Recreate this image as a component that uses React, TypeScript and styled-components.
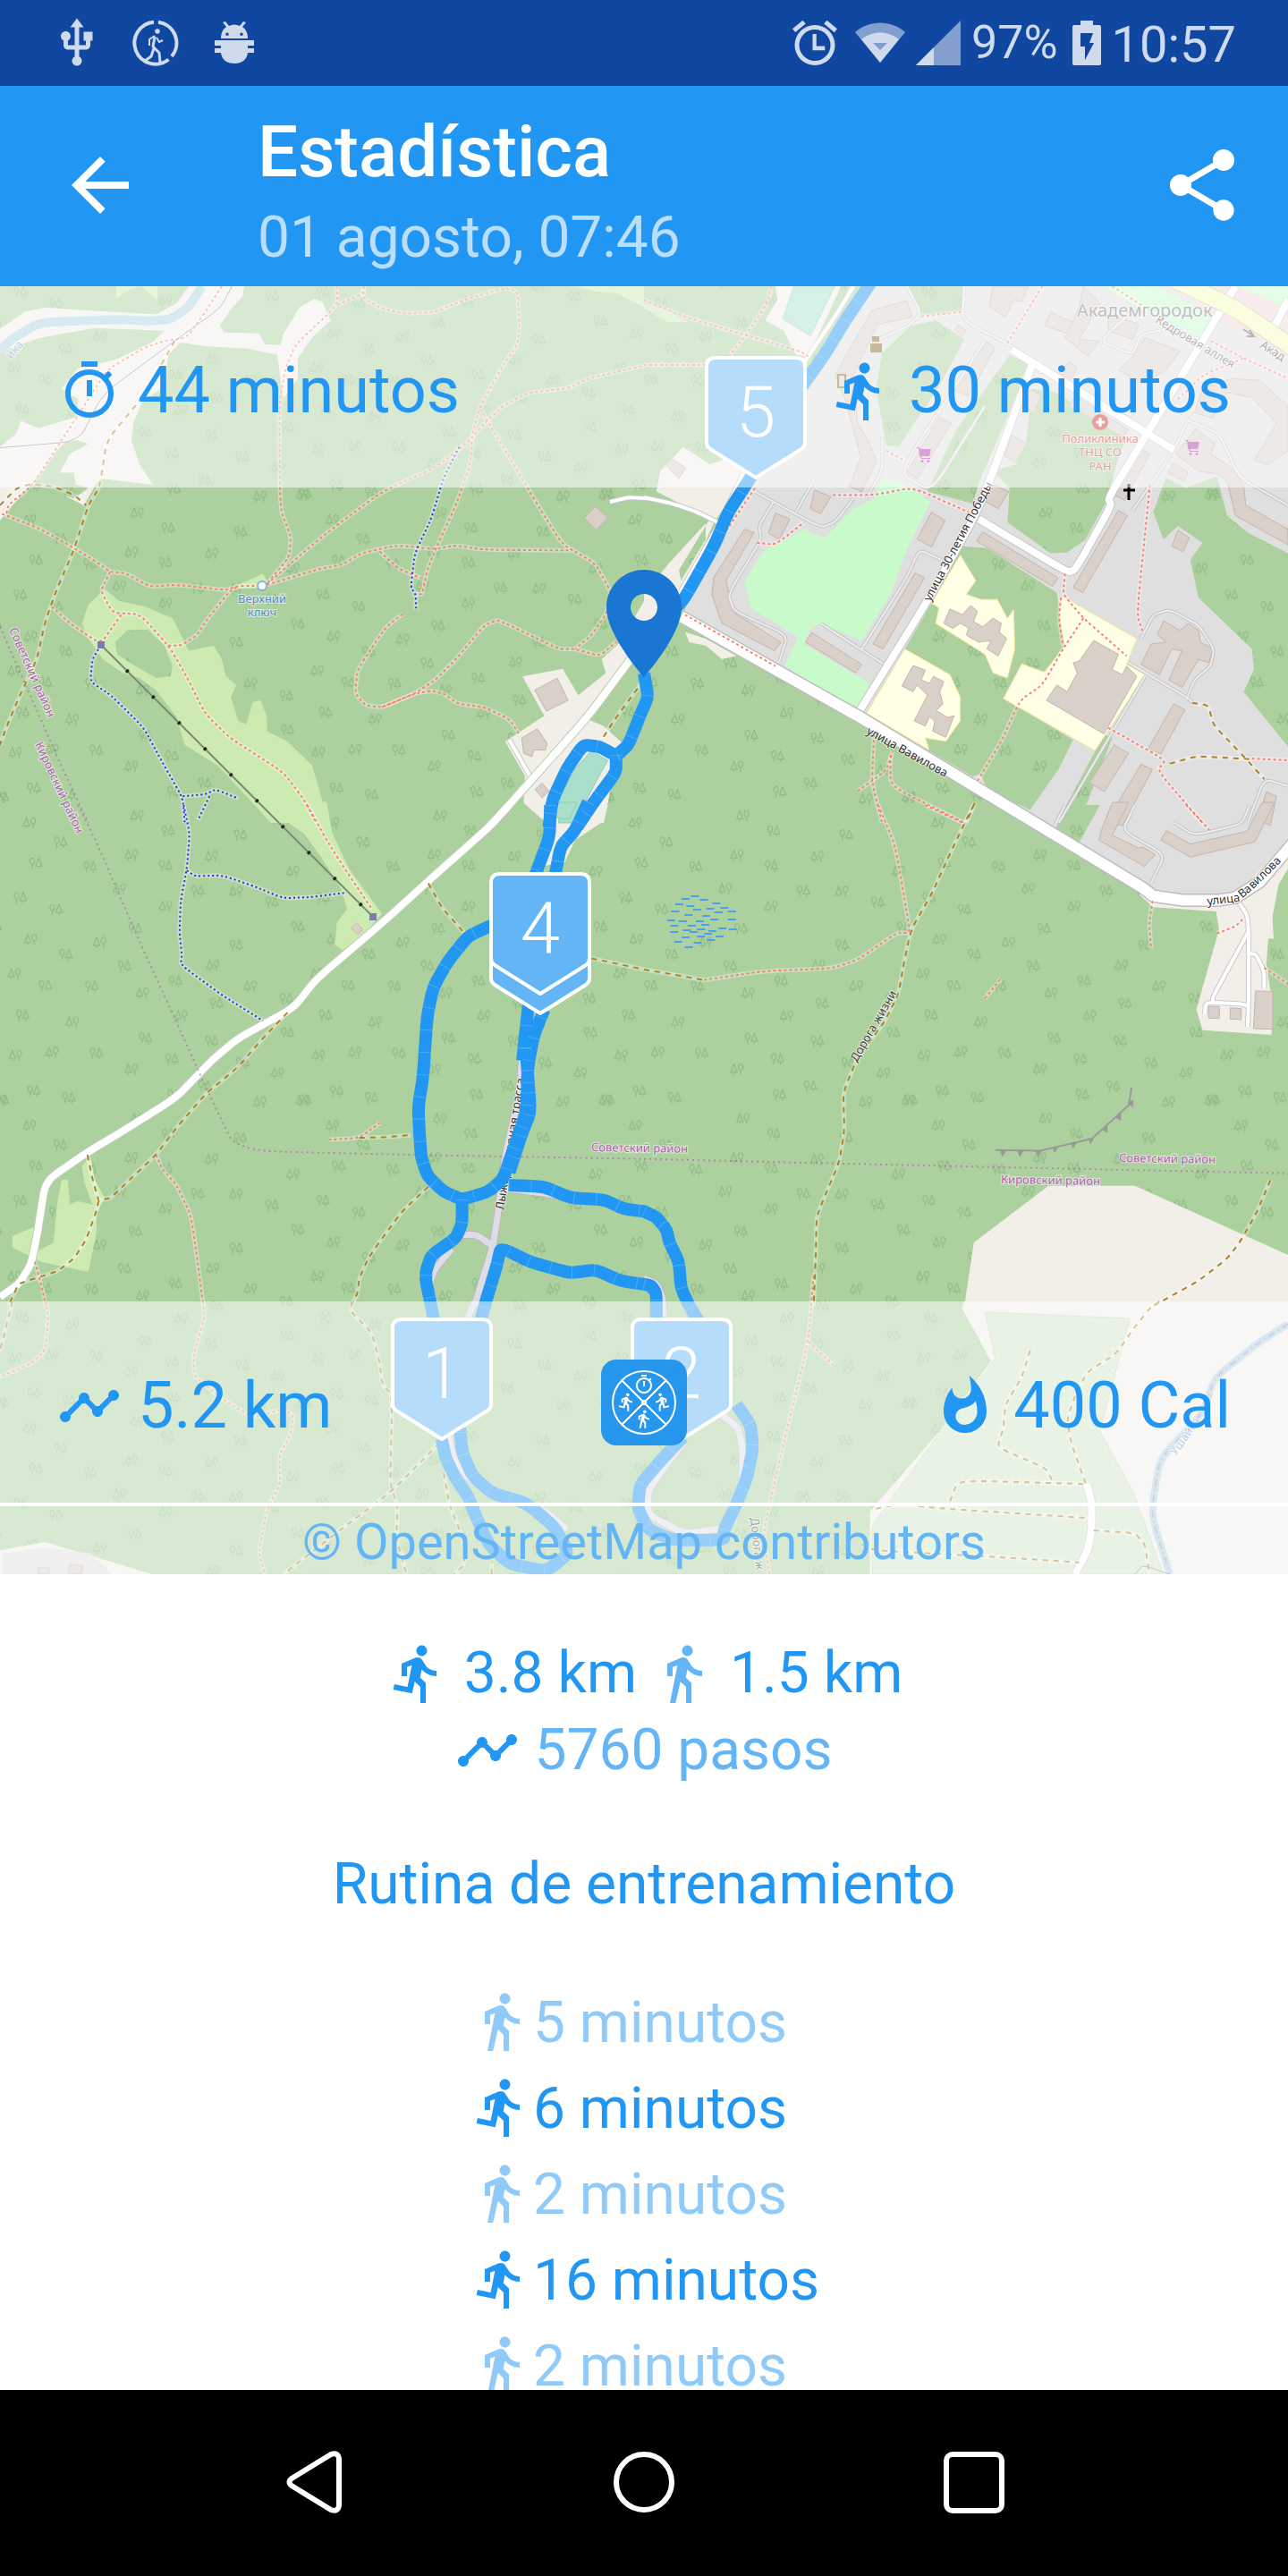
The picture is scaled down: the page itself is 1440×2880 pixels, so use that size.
import React from "react";
import styled, { createGlobalStyle } from "styled-components";

/* ------------------------------------------------------------------ */
/* Theme                                                               */
/* ------------------------------------------------------------------ */

const color = {
  statusBar: "#0f47a1",
  statusIcon: "#cfdaec",
  primary: "#2196f3",
  primaryDark: "#1976d2",
  primarySoft: "#64b5f6",
  primaryPale: "#90caf9",
  subtitle: "#bbdefb",
  veil: "rgba(255, 255, 255, 0.53)",
};

const GlobalStyle = createGlobalStyle`
  *, *::before, *::after { box-sizing: border-box; }
  html, body { margin: 0; padding: 0; background: #fff; }
  body { font-family: Roboto, "Noto Sans", sans-serif; }
`;

/* ------------------------------------------------------------------ */
/* Layout parts                                                        */
/* ------------------------------------------------------------------ */

const Screen = styled.div`
  display: flex;
  flex-direction: column;
  height: 100vh;
  background: #fff;
`;

const StatusBar = styled.div`
  display: flex;
  align-items: center;
  justify-content: space-between;
  flex: none;
  height: 96px;
  padding: 0 58px 0 56px;
  background: ${color.statusBar};
  color: ${color.statusIcon};
`;

const Notifications = styled.div`
  display: flex;
  gap: 28px;
`;

const SystemState = styled.div`
  display: flex;
  align-items: center;
  gap: 12px;
`;

const StatusIcon = styled.svg<{ $before?: number; $after?: number }>`
  display: block;
  margin-left: ${(p) => p.$before ?? 0}px;
  margin-right: ${(p) => p.$after ?? 0}px;
`;

const BatteryLevel = styled.span`
  font-size: 52px;
  line-height: 64px;
`;

const Clock = styled.time`
  padding-top: 4px;
  font-size: 56px;
  line-height: 64px;
`;

const AppBar = styled.header`
  display: flex;
  align-items: center;
  flex: none;
  padding: 14px 48px 14px 64px;
  background: ${color.primary};
  color: #fff;
`;

const IconButton = styled.button`
  display: block;
  flex: none;
  padding: 0;
  border: 0;
  background: none;
  color: inherit;
  cursor: pointer;
`;

const Titles = styled.div`
  flex: 1;
  padding: 12px 0 0 128px;
`;

const Title = styled.h1`
  margin: 0;
  font-size: 80px;
  line-height: 96px;
  font-weight: 500;
`;

const Subtitle = styled.p`
  margin: 0;
  padding-top: 8px;
  color: ${color.subtitle};
  font-size: 64px;
  line-height: 80px;
`;

const MapSection = styled.section`
  position: relative;
  flex: none;
  aspect-ratio: 1 / 1;
`;

const MapDrawing = styled.svg`
  display: block;
  width: 100%;
  height: 100%;
`;

const MapOverlay = styled.div`
  position: absolute;
  inset: 0;
  display: flex;
  flex-direction: column;
`;

const StatStrip = styled.div`
  display: grid;
  grid-template-columns: 1fr auto 1fr;
  align-items: center;
  height: 225px;
  padding: 0 64px;
  background: ${color.veil};
  color: ${color.primary};
`;

const OverlaySpacer = styled.div`
  flex: 1;
`;

const Stat = styled.div<{ $end?: boolean }>`
  display: flex;
  align-items: center;
  justify-content: ${(p) => (p.$end ? "flex-end" : "flex-start")};
  gap: 18px;
  grid-column: ${(p) => (p.$end ? 3 : 1)};
  padding-top: 8px;
  font-size: 72px;
  line-height: 84px;
  white-space: nowrap;
`;

const Attribution = styled.div`
  height: 80px;
  border-top: 4px solid #fff;
  background: ${color.veil};
  background-clip: padding-box;
  color: ${color.primarySoft};
  font-size: 56px;
  line-height: 80px;
  text-align: center;
`;

const Details = styled.main`
  flex: 1;
  min-height: 0;
  overflow: hidden;
  padding-top: 68px;
  color: ${color.primary};
  font-size: 64px;
  line-height: 86px;
`;

const SummaryLine = styled.p`
  display: flex;
  align-items: center;
  justify-content: center;
  gap: 16px;
  margin: 0;
`;

const Tinted = styled.span<{ $tint: string }>`
  display: inline-flex;
  color: ${(p) => p.$tint};
`;

const RoutineTitle = styled.h2`
  margin: 64px 0;
  font-size: 64px;
  line-height: 86px;
  font-weight: 400;
  text-align: center;
`;

const RoutineList = styled.ul`
  width: max-content;
  margin: 0 auto;
  padding: 0;
  list-style: none;
`;

const RoutineStep = styled.li<{ $run: boolean }>`
  display: flex;
  align-items: center;
  color: ${(p) => (p.$run ? color.primary : color.primaryPale)};
  line-height: 96px;
`;

const StepIcon = styled.span`
  display: flex;
  padding-bottom: 4px;
`;

const NavBar = styled.nav`
  display: flex;
  align-items: center;
  justify-content: center;
  flex: none;
  gap: 288px;
  height: 208px;
  background: #000;
  color: #fff;
`;

/* ------------------------------------------------------------------ */
/* Icons                                                               */
/* ------------------------------------------------------------------ */

const RUN =
  "M13.500 5.500c1.100 0 2-.9 2-2s-.9-2-2-2-2 .9-2 2 .9 2 2 2zM9.900 19.400l1-4.400 2.100 2v6h2v-7.500l-2.100-2 .6-3c1.300 1.500 3.300 2.500 5.500 2.500v-2c-1.900 0-3.500-1-4.300-2.400l-1-1.600c-.4-.6-1-1-1.700-1-.3 0-.5.1-.8.1L6 8.300V13h2V9.600l1.800-.7-1.600 8.100-4.900-1-.4 2z";
const WALK =
  "M13.5 5.5c1.1 0 2-.9 2-2s-.9-2-2-2-2 .9-2 2 .9 2 2 2zM9.8 8.9L7 23h2.1l1.8-8 2.1 2v6h2v-7.5l-2.1-2 .6-3C14.8 12 16.8 13 19 13v-2c-1.9 0-3.5-1-4.3-2.4l-1-1.6c-.4-.6-1-1-1.7-1-.3 0-.5.1-.8.1L6 8.3V13h2V9.6l1.8-.7z";
const TIMER =
  "M15 1H9v2h6V1zm-4 13h2V8h-2v6zm8.03-6.61l1.42-1.42c-.43-.51-.9-.99-1.41-1.41l-1.42 1.42C16.07 4.74 14.12 4 12 4c-4.97 0-9 4.03-9 9s4.02 9 9 9 9-4.03 9-9c0-2.12-.74-4.07-1.97-5.61zM12 20c-3.87 0-7-3.13-7-7s3.13-7 7-7 7 3.13 7 7-3.13 7-7 7z";
const TIMELINE =
  "M23 8c0 1.1-.9 2-2 2-.18 0-.35-.02-.51-.07l-3.56 3.55c.05.16.07.34.07.52 0 1.1-.9 2-2 2s-2-.9-2-2c0-.18.02-.36.07-.52l-2.55-2.55c-.16.05-.34.07-.52.07s-.36-.02-.52-.07l-4.55 4.56c.05.16.07.33.07.51 0 1.1-.9 2-2 2s-2-.9-2-2 .9-2 2-2c.18 0 .35.02.51.07l4.56-4.55C8.02 9.36 8 9.18 8 9c0-1.1.9-2 2-2s2 .9 2 2c0 .18-.02.36-.07.52l2.55 2.55c.16-.05.34-.07.52-.07s.36.02.52.07l3.55-3.56C19.02 8.35 19 8.18 19 8c0-1.1.9-2 2-2s2 .9 2 2z";
const FLAME =
  "M13.5.67s.74 2.65.74 4.8c0 2.06-1.35 3.73-3.41 3.73-2.07 0-3.63-1.67-3.63-3.73l.03-.36C5.21 7.51 4 10.62 4 14c0 4.42 3.58 8 8 8s8-3.58 8-8C20 8.61 17.41 3.8 13.5.67zM11.71 19c-1.78 0-3.22-1.4-3.22-3.14 0-1.62 1.05-2.76 2.81-3.12 1.77-.36 3.6-1.21 4.62-2.58.39 1.29.59 2.65.59 4.04 0 2.65-2.15 4.8-4.8 4.8z";
const BACK = "M20 11H7.83l5.59-5.59L12 4l-8 8 8 8 1.41-1.41L7.83 13H20v-2z";
const SHARE =
  "M18 16.08c-.76 0-1.44.3-1.96.77L8.91 12.7c.05-.23.09-.46.09-.7s-.04-.47-.09-.7l7.05-4.11c.54.5 1.25.81 2.04.81 1.66 0 3-1.34 3-3s-1.34-3-3-3-3 1.34-3 3c0 .24.04.47.09.7L8.04 9.81C7.5 9.31 6.79 9 6 9c-1.66 0-3 1.34-3 3s1.34 3 3 3c.79 0 1.5-.31 2.04-.81l7.12 4.16c-.05.21-.08.43-.08.65 0 1.61 1.31 2.92 2.92 2.92 1.61 0 2.92-1.31 2.92-2.92s-1.31-2.92-2.92-2.92z";
const USB =
  "M15 7v4h1v2h-3V5h2l-3-4-3 4h2v8H8v-2.07c.7-.37 1.2-1.08 1.2-1.93 0-1.21-.99-2.2-2.2-2.2-1.21 0-2.2.99-2.2 2.2 0 .85.5 1.56 1.2 1.93V13c0 1.11.89 2 2 2h3v3.05c-.71.37-1.2 1.1-1.2 1.95 0 1.22.99 2.2 2.2 2.2 1.21 0 2.2-.98 2.2-2.2 0-.85-.49-1.58-1.2-1.95V15h3c1.11 0 2-.89 2-2v-2h1V7h-4z";
const PIN =
  "M12 2C8.13 2 5 5.13 5 9c0 5.25 7 13 7 13s7-7.75 7-13c0-3.87-3.13-7-7-7zm0 9.5c-1.38 0-2.5-1.12-2.5-2.5s1.12-2.5 2.5-2.5 2.5 1.12 2.5 2.5-1.12 2.5-2.5 2.5z";
const CART =
  "M0 1h3l1 2h12l-2 8H5l1 2h9v1H5L3 10 2 2H0zM6 15a1 1 0 1 0 0 3 1 1 0 0 0 0-3zM13 15a1 1 0 1 0 0 3 1 1 0 0 0 0-3z";

const Glyph = ({ d, size }: { d: string; size: number }) => (
  <svg width={size} height={size} viewBox="0 0 24 24" fill="currentColor" aria-hidden="true">
    <path d={d} />
  </svg>
);

const RunnerRing = () => (
  <StatusIcon width="60" height="60" viewBox="0 0 60 60" fill="none" stroke="currentColor" aria-hidden="true">
    <path d="M33 6.700a23.500 23.500 0 0 1 15 38.300M44.500 48.500A23.500 23.500 0 1 1 28 6.700" strokeWidth="4" />
    <circle cx="32" cy="17" r="2.800" fill="currentColor" stroke="none" />
    <path d="M29 23l-2 11 7 7 1 11M28 36l-3 9-7 5" strokeWidth="3" strokeLinejoin="round" />
    <path d="M29 22l-6 4v7M31 24l3 5 4-2" strokeWidth="2" />
  </StatusIcon>
);

const Droid = () => (
  <StatusIcon width="60" height="60" viewBox="0 0 60 60" fill="currentColor" aria-hidden="true">
    <path
      fillRule="evenodd"
      d="M15 25c0-6 2-10 6-13l-4-5 3-1 4 5c4-2 8-2 12 0l4-5 3 1-4 5c4 3 6 7 6 13zM22 18.500a1.800 1.800 0 1 0 0 3.600 1.800 1.800 0 0 0 0-3.600zM38 18.500a1.800 1.800 0 1 0 0 3.600 1.800 1.800 0 0 0 0-3.600z"
    />
    <path d="M8 27h44v6h-7v3h7v5h-7c-1 8-7 12-15 12s-14-4-15-12H8v-5h7v-3H8z" />
  </StatusIcon>
);

const Alarm = () => (
  <StatusIcon $after={8} width="50" height="60" viewBox="2 0 20 24" fill="currentColor" aria-hidden="true">
    <path d="M22 5.720l-4.600-3.860-1.290 1.530 4.600 3.860zM7.880 3.390L6.600 1.860 2 5.710l1.290 1.530z" />
    <path d="M11 8h1.700v5.400h3.800v1.900H11z" />
    <path
      fillRule="evenodd"
      d="M12 4a9 9 0 1 0 0 18 9 9 0 0 0 0-18zm0 2a7 7 0 1 1 0 14 7 7 0 0 1 0-14z"
    />
  </StatusIcon>
);

const Wifi = () => (
  <StatusIcon width="56" height="60" viewBox="0 0 56 60" fill="currentColor" aria-hidden="true">
    <path d="M0 18C16 4 40 4 56 18L28 52z" opacity="0.6" />
    <path fillRule="evenodd" d="M7 26c12-10 30-10 42 0L28 52zM20 30l8 8 8-8z" />
  </StatusIcon>
);

const Signal = () => (
  <StatusIcon width="50" height="50" viewBox="0 0 50 50" fill="currentColor" aria-hidden="true">
    <path d="M50 0v50H0z" opacity="0.6" />
    <path d="M20 30v20H0z" />
  </StatusIcon>
);

const Battery = () => (
  <StatusIcon $before={4} width="32" height="50" viewBox="0 0 32 50" fill="currentColor" aria-hidden="true">
    <path
      fillRule="evenodd"
      d="M9 0h14v5h7a2 2 0 0 1 2 2v41a2 2 0 0 1-2 2H2a2 2 0 0 1-2-2V7a2 2 0 0 1 2-2h7zM9 14v15h5v15l10-19h-5l4-11z"
    />
  </StatusIcon>
);

const AppLogo = () => (
  <svg width="96" height="96" viewBox="0 0 96 96" aria-hidden="true">
    <rect width="96" height="96" rx="17" fill="#2796ed" />
    <g fill="none" stroke="#fff" strokeWidth="2">
      <circle cx="48" cy="48" r="35" />
      <path d="M23 23l50 50M73 23L23 73" />
    </g>
    <g fill="#fff">
      <circle cx="48" cy="48" r="3" />
      <path d={TIMER} transform="translate(36 16)" />
      <path d={WALK} transform="translate(36 55) scale(.95)" />
      <path d={RUN} transform="translate(17 36) scale(.95)" />
      <path d={RUN} transform="translate(79 36) scale(-.95 .95)" />
    </g>
  </svg>
);

/* ------------------------------------------------------------------ */
/* ------------------------------------------------------------------ */

type Sheet = { x: number; y: number; sx: number; sy: number };

const UNIT = 720 / 1568;
const NW: Sheet = { x: 0, y: 0, sx: UNIT, sy: 600 / 1568 };
const NE: Sheet = { ...NW, x: 720 };
const W: Sheet = { x: 0, y: 580, sx: UNIT, sy: 560 / 1568 };
const E: Sheet = { ...W, x: 720 };
const SW: Sheet = { x: 0, y: 1080, sx: UNIT, sy: 1 / 3 };
const SE: Sheet = { ...SW, x: 720 };

type Feature = [Sheet, string];

const project = ([s, text]: Feature): [number, number][] => {
  const n = text.trim().split(/\s+/).map(Number);
  const out: [number, number][] = [];
  for (let i = 0; i + 1 < n.length; i += 2) {
    out.push([Math.round((s.x + n[i] * s.sx) * 10) / 10, Math.round((s.y + n[i + 1] * s.sy) * 10) / 10]);
  }
  return out;
};

const polygon = (f: Feature) => "M" + project(f).map((p) => p.join(" ")).join("L") + "Z";

const curve = (f: Feature) => {
  const p = project(f);
  let d = `M${p[0].join(" ")}`;
  for (let i = 1; i < p.length - 1; i++) {
    const mx = p[i][0] * 0.75 + p[i + 1][0] * 0.25;
    const my = p[i][1] * 0.75 + p[i + 1][1] * 0.25;
    const sx = p[i][0] * 0.75 + p[i - 1][0] * 0.25;
    const sy = p[i][1] * 0.75 + p[i - 1][1] * 0.25;
    d += `L${sx} ${sy}Q${p[i].join(" ")} ${mx} ${my}`;
  }
  return d + `L${p[p.length - 1].join(" ")}`;
};

const sand: Feature[] = [
  [NW, "0 125 60 75 110 62 200 70 380 82 430 50 460 0 595 0 590 30 560 70 535 115 545 135 630 138 645 170 683 172 690 140 730 60 765 38 785 45 805 100 760 150 725 210 725 270 690 330 675 200 600 182 500 175 440 165 410 200 400 290 345 340 325 400 320 450 340 520 372 580 245 562 230 585 205 640 120 590 75 578 30 640 0 685"],
  [NW, "1272 1140 1370 1118 1408 1195 1475 1130 1465 1090 1510 1040 1568 920 1568 1060 1430 1265 1470 1285 1520 1340 1490 1450 1470 1568 1330 1568 1275 1510 1278 1430 1230 1330 1325 1255"],
  [W, "1300 0 1480 0 1470 50 1400 110 1375 180 1325 190 1345 80 1340 10"],
  [NE, "320 0 480 0 400 205 370 200 340 130 295 100 325 40"],
  [NE, "40 540 95 470 160 520 200 505 250 550 170 690 120 830 90 930 20 1110 0 1150 0 900 60 810 160 680 30 600"],
  [NE, "100 1010 150 1030 225 1080 190 1090 150 1050 110 1040"],
  [E, "1205 280 1240 320 1393 333 1400 390 1345 640 1360 705 1528 720 1530 620 1515 500 1520 418 1533 418 1530 350 1545 250 1568 200 1568 100 1440 280 1300 290"],
  [E, "780 1568 803 1370 985 1192 1195 1192 1568 1408 1568 1568"],
  [SE, "778 165 775 190 845 365 720 600 550 870 550 1080 1568 1080 1568 165"],
  [SW, "0 1000 110 972 370 1080 0 1080"],
];

const residential: Feature[] = [
  [NE, "640 0 1568 0 1568 1568 970 1568 520 1250 95 970 120 850 270 560 400 290 560 0"],
  [E, "850 0 1220 255 1250 280 1310 292 1440 285 1568 110 1568 0"],
  [SW, "5 1010 110 990 220 1010 275 1080 5 1080"],
];

const woods: Feature[] = [
  [NW, "0 190 100 150 230 122 400 130 370 165 280 215 190 240 150 300 190 330 190 380 95 415 50 393 40 430 0 470"],
  [NW, "75 578 110 530 130 490 160 455 190 450 215 460 170 490 145 545 180 545 185 580 215 590 180 620"],
  [NE, "640 0 785 0 770 75 680 85"],
  [NE, "580 195 650 115 710 100 780 155 720 290 620 470 590 465 565 300"],
  [NE, "890 200 940 230 820 560 800 635 690 600 760 420"],
  [NE, "945 300 1000 310 1175 440 1150 520 1130 620 1075 740 1030 778 990 780 885 690 890 590 850 540 905 520 930 460"],
  [NE, "1270 560 1320 590 1395 555 1420 670 1470 720 1568 780 1568 1345 1460 1185 1485 1120 1480 1060 1350 910 1330 800 1360 750 1300 700 1265 740 1240 660"],
  [NE, "775 760 835 765 1005 895 1025 1055 970 1130 920 1105 875 1205 1045 1325 1010 1410 940 1530 835 1470 820 1425 800 1432 690 1355 635 1060 700 925"],
  [NE, "1120 1310 1140 1320 1060 1568 1005 1568"],
  [NE, "165 670 150 690 150 740 90 860 85 830"],
  [E, "1025 0 1110 0 1060 117 1003 75"],
  [E, "1545 250 1568 200 1568 120 1575 260"],
];

const meadows: Feature[] = [
  [NW, "283 0 283 35 318 8 345 0 383 42 383 0"],
  [NW, "1400 0 1450 15 1500 20 1568 60 1568 0"],
  [NE, "0 50 50 70 110 105 60 105 0 65"],
  [NW, "255 885 290 920 350 935 420 970 460 1065 520 1050 540 1090 550 1140 575 1165 562 1200 580 1270 600 1280 615 1215 635 1210 650 1260 650 1300 700 1330 760 1400 800 1568 660 1568 530 1400 450 1340 430 1260 380 1180 340 1145 300 1130 250 1090 215 1030 200 985 215 930"],
  [NW, "575 875 640 840 650 860 640 880 580 885"],
  [W, "640 -10 795 -10 810 90 850 200 930 340 890 400 835 455 815 435 820 370 845 325 830 260 780 160 740 90 690 45"],
  [W, "150 1175 165 1172 170 1250 190 1240 225 1250 205 1180 200 1130 220 1100 230 1170 255 1230 235 1280 235 1340 215 1462 100 1430 30 1385 30 1350 85 1320 95 1395 130 1370 140 1240"],
];

const clearing: Feature = [NW, "280 1040 310 1005 360 1003 400 1050 420 1110 415 1140 380 1145 330 1110 285 1075"];

const parks: Feature[] = [
  [NE, "580 560 640 580 698 630 640 770 600 900 530 1035 430 985 405 1000 390 1045 550 1160 515 1240 343 1110 375 1025 260 940 245 860 290 775 390 710 440 735 510 650 560 620"],
  [NE, "1120 0 1250 0 1395 95 1360 155 1200 60"],
  [NE, "1440 0 1568 0 1568 65"],
];

const schools: Feature[] = [
  [NE, "770 785 808 860 785 900 820 915 860 915 885 970 900 945 903 1060 885 1145 850 1130 830 1075 710 985 718 940 700 925"],
  [NE, "635 1060 745 1135 770 1200 770 1270 735 1330 685 1320 695 1355 542 1248"],
  [NE, "1018 905 1200 1030 1175 1105 1220 1135 1098 1357 875 1205 920 1103 975 1128 1025 1050 1010 960"],
];

const ponds: Feature[] = [
  [NE, "365 0 465 0 405 145 338 95"],
  [NW, "1360 1568 1365 1490 1400 1410 1440 1358 1480 1385 1450 1450 1400 1568"],
  [W, "1355 -8 1405 -8 1385 45 1355 40"],
];

const buildings: Feature[] = [
  [NW, "1302 1180 1357 1145 1383 1210 1330 1242"],
  [NW, "1270 1320 1308 1293 1332 1335 1328 1355 1300 1355 1295 1375 1275 1365"],
  [NW, "1422 677 1450 643 1480 677 1452 712"],
  [NW, "1303 1470 1320 1452 1337 1475 1320 1495"],
  [W, "855 385 868 370 883 390 872 406"],
  [NE, "52 520 68 505 102 530 85 562"],
  [NE, "640 42 652 90 568 112 510 260 520 400 545 450 567 510 530 600 500 585 528 500 490 330 465 260 555 70"],
  [NE, "835 163 855 180 790 320 750 300"],
  [NE, "718 383 748 400 665 562 640 545"],
  [NE, "895 435 932 460 905 515 878 495"],
  [NE, "848 580 888 600 862 650 832 628"],
  [NE, "415 595 455 615 430 665 405 650"],
  [NE, "320 663 355 680 330 740 303 722"],
  [NE, "700 660 733 685 700 762 665 738"],
  [NE, "245 710 268 720 200 860 215 950 333 1040 318 1065 190 985 165 900 170 850"],
  [NE, "660 838 683 852 582 1060 558 1045"],
  [NE, "408 1012 530 1105 515 1130 393 1040"],
  [NE, "825 718 1008 852 995 877 810 745"],
  [NE, "1155 655 1177 670 1068 895 1045 880"],
  [NE, "1210 475 1232 490 1170 625 1145 610"],
  [NE, "1300 713 1328 735 1312 775 1285 760"],
  [NE, "745 943 775 960 795 933 812 950 802 980 825 995 850 970 870 985 865 1010 883 1030 862 1080 835 1060 845 1035 815 1040 785 1020 790 998 770 985 752 1000 730 985"],
  [NE, "655 1108 685 1122 675 1150 695 1160 705 1140 730 1155 720 1185 728 1220 712 1240 740 1260 755 1255 735 1318 703 1300 708 1270 695 1258 685 1285 658 1270 690 1195 665 1165 655 1185 628 1168"],
  [NE, "1095 1035 1155 1075 1140 1120 1165 1135 1175 1110 1200 1140 1120 1308 980 1210 1005 1165 1030 1185 1055 1130 1045 1100 1060 1095"],
  [NE, "1265 978 1305 1005 1325 985 1350 1005 1355 1040 1385 1060 1375 1100 1350 1090 1310 1172 1278 1150 1310 1065 1285 1060 1255 1135 1210 1105 1235 1045 1270 1040 1250 1018"],
  [NE, "1290 1220 1317 1238 1258 1367 1228 1350"],
  [NE, "1145 1340 1180 1365 1120 1477 1085 1450"],
  [NE, "1210 1397 1238 1412 1165 1575 1120 1575"],
  [NE, "1515 1477 1540 1490 1525 1575 1495 1560"],
  [NE, "1345 415 1390 460 1380 490 1430 530 1460 580 1465 640 1568 710 1568 755 1440 670 1420 570 1400 550 1350 540 1295 490"],
  [NE, "1360 300 1430 270 1500 275 1568 350 1568 480 1520 520 1485 510 1540 400 1480 325 1420 310 1385 385 1340 370"],
  [NE, "990 75 1060 115 1045 145 975 115"],
  [NE, "1070 0 1110 50 1060 155 1110 160 1080 205 1025 150 1060 60"],
  [NE, "1130 85 1205 110 1190 155 1130 130"],
  [NE, "1220 150 1305 190 1270 245 1215 285 1155 245 1190 205"],
  [NE, "850 0 935 0 920 45 900 40 880 90 840 60"],
  [NE, "1035 220 1055 240 1040 270 1010 255"],
  [NE, "1050 320 1180 420 1165 440 1035 350"],
  [NE, "940 300 965 320 950 370 925 350"],
  [NE, "1290 515 1325 545 1315 570 1275 545"],
  [NE, "765 112 785 130 775 145 757 128"],
  [E, "1140 -8 1180 -8 1140 95 1205 135 1215 132 1245 155 1218 192 1108 110 1112 85"],
  [E, "1258 110 1272 80 1330 122 1468 82 1505 -8 1535 -8 1488 115 1330 163"],
  [E, "1375 630 1401 632 1401 668 1375 667"],
  [E, "1427 635 1454 637 1454 672 1427 670"],
  [E, "1489 582 1531 584 1531 702 1484 700"],
  [SW, "92 1058 120 1058 120 1080 92 1080"],
  [SW, "170 1046 202 1052 198 1080 165 1075"],
];

const alleys: Feature[] = [
  [NE, "270 600 430 705 465 690 510 620"],
  [NE, "315 630 280 700 285 740 205 900 220 950 350 1020 330 1095"],
  [NE, "410 575 370 660"],
  [NE, "580 440 580 540 540 620"],
  [NE, "430 985 585 1105"],
  [NE, "725 800 670 770 640 850 530 1060"],
  [NE, "1210 1030 1240 960 1280 945 1350 990 1388 1060 1380 1110 1340 1150 1320 1210"],
  [NE, "1180 1100 1320 1200 1340 1220"],
  [NE, "1220 1140 1010 1568"],
  [NE, "780 0 775 100 890 170 950 220"],
  [NE, "640 0 675 80 640 120 560 160"],
  [NE, "830 160 620 545 700 600 830 350"],
  [NE, "1200 60 1110 160 1190 200 1210 140 1300 120"],
  [NE, "1320 390 1400 430 1450 560 1568 640"],
  [NE, "1320 400 1290 480 1190 655"],
  [NE, "1568 1460 1510 1440 1470 1568"],
  [E, "1195 0 1165 80 1268 155 1235 245"],
  [E, "1290 55 1340 95 1455 60 1475 0"],
  [E, "1025 0 1000 65"],
];

const lanes: Feature[] = [
  [NW, "1485 630 1530 617 1580 620"],
  [NE, "0 617 70 635 130 660 180 690"],
  [NE, "510 0 470 80 380 240"],
  [NE, "240 550 180 700 85 900"],
  [NW, "1240 1325 1290 1430"],
  [E, "1440 290 1472 350 1472 620 1470 695"],
  [E, "1470 400 1385 600 1385 615"],
  [E, "1365 655 1368 618 1450 622 1468 628"],
  [E, "1475 465 1490 468 1510 520 1510 575"],
];

const streets: Feature[] = [
  [NE, "945 230 820 640 700 900 520 1250"],
  [NE, "895 185 1290 478"],
  [NE, "1440 0 1230 420 1130 620 1138 640 1050 830 1030 835 815 680"],
  [NE, "1568 40 1530 130"],
  [SE, "1078 778 1090 840 1090 930 1080 1000 1050 1080"],
];

const forestRoad: Feature[] = [
  [NW, "1535 1090 1430 1260 1240 1515 1190 1580"],
  [W, "1240 0 1190 70 1050 230 930 370 770 545 715 635 580 730 515 800 430 915 300 1020 215 1085 125 1165 108 1200 90 1350 75 1440 45 1500 0 1540"],
];

const avenuePoints = [
  ...project([NE, "90 965 520 1255"]),
  ...project([E, "1215 260 1240 285 1310 298 1400 298 1440 290 1500 240 1580 120"]),
];
const avenue = "M" + avenuePoints.map((p) => p.join(" ")).join("L");

const skiTrack: Feature[] = [
  [W, "1270 800 1265 900 1230 1100 1220 1200 1210 1300 1200 1380 1155 1568"],
  [W, "1205 1385 1160 1345 1120 1345"],
  [W, "1225 1200 1320 1215 1450 1240"],
  [W, "1100 1390 1060 1450 1045 1500 1060 1568"],
  [SW, "1155 165 1140 220"],
  [SW, "1090 600 1105 700 1150 770 1320 860 1380 930"],
  [SE, "190 545 230 590 240 660 240 760 215 920 100 945 10 880 10 800 50 720 95 640"],
  [SE, "0 88 30 105 45 150 48 215"],
];

const footpaths: Feature[] = [
  [NW, "540 0 500 75 455 150 400 160 350 180 260 245 210 340 150 450 80 580 20 640 15 670"],
  [NW, "5 665 100 710 180 765 240 810 268 835 305 838 365 878 430 872 550 888 580 876 640 875"],
  [NW, "268 835 245 890 275 955 340 958 410 1050 450 1130 500 1250 560 1320 690 1420 740 1500 770 1568"],
  [W, "748 0 800 120 850 220 905 325"],
  [NW, "295 960 245 1045 170 985 125 935"],
  [NW, "410 1050 440 1050 480 1020 500 980 560 890 580 876"],
  [NW, "820 0 822 55 720 170 695 240 680 340 682 650 708 730 705 790 650 870"],
  [NW, "822 55 885 20 885 0"],
  [NW, "885 0 885 35 930 65 985 80 1060 75 1130 40 1230 5 1260 15 1265 120 1260 170 1220 240 1170 350 1150 430 1145 520 1110 640 1060 770 1040 830 1028 900 1010 900"],
  [NW, "650 870 780 735 930 600 1060 530 1140 455 1180 400 1230 345 1290 310 1385 298 1430 270 1568 232"],
  [NW, "1170 360 1240 500 1320 660 1370 755 1450 810 1490 900 1475 960 1440 1020 1400 1060"],
  [NW, "650 872 780 825 830 815 880 780 965 757 1060 768 1110 757 1180 770 1395 772"],
  [NW, "925 775 970 825 1025 853"],
  [NW, "980 958 940 995 870 1120 865 1190 890 1225 930 1230 1010 1190 1060 1150 1110 1090 1180 990 1210 975 1240 990 1360 1060 1400 1060 1460 1080 1500 1040"],
  [NW, "930 1230 1010 1190 1050 1182 1080 1190 1115 1220 1180 1230 1240 1265 1265 1310"],
  [W, "380 1095 395 1140 430 1190 465 1285 480 1420 495 1568"],
  [W, "85 1430 100 1500 112 1568"],
  [W, "800 1048 875 1042 925 995"],
  [SW, "495 165 498 220 470 350 475 420 560 510 620 555 690 525 715 550 705 620 680 680 682 780 650 860 630 1010 645 1080"],
  [SW, "112 165 118 220 110 330 80 370 0 418"],
  [NE, "0 40 100 90 240 140 380 190 400 205"],
  [NE, "310 0 300 50 250 140 210 200"],
  [NE, "0 230 150 230"],
  [NE, "675 88 775 75"],
  [NE, "970 0 880 175"],
  [NE, "1140 0 1230 70"],
  [NE, "460 610 560 610 655 588 790 660"],
  [NE, "275 750 320 755 390 690"],
  [NE, "270 590 180 750"],
  [NE, "590 480 635 510"],
  [NE, "100 960 320 1110"],
  [NE, "1025 840 1020 900 1070 970 1175 1080"],
  [NE, "1070 970 1020 1060 970 1165 915 1210 870 1330 810 1450"],
  [NE, "1015 910 1010 970 1020 1050"],
  [NE, "1232 580 1200 960 1215 1010"],
  [NE, "1130 1290 1270 1385 1250 1415 1360 1568"],
  [NE, "1480 1380 1568 1385"],
  [NE, "560 1310 555 1450 580 1568"],
  [NE, "520 1475 590 1415 605 1360"],
  [NE, "600 1370 600 1460 780 1568"],
  [NE, "1380 160 1460 210 1568 270"],
  [NE, "1300 330 1360 260 1460 210"],
  [E, "570 0 610 120 635 300 648 400 615 400 520 485 455 512 290 520 145 548"],
  [E, "685 0 780 58"],
  [E, "1238 300 1230 370 1235 450"],
  [E, "830 605 868 545"],
  [E, "1395 402 1440 380 1460 355"],
  [E, "1510 510 1568 560"],
  [E, "1320 0 1378 80"],
  [SE, "413 80 400 300 330 700 290 940 305 1080"],
  [SE, "400 300 462 380"],
];

const tracks: Feature[] = [
  [NW, "425 160 350 320 260 450 243 585 215 640 180 770 140 880 110 980 90 1090 50 1190 15 1290 0 1340"],
  [NW, "0 640 40 590 75 578 130 585 180 610 210 640"],
  [NW, "1568 1150 1500 1260 1465 1325"],
  [W, "700 650 640 730 580 820 500 905 430 1010 380 1095 310 1180 270 1230 240 1238 235 1270 210 1360 180 1420 140 1460 60 1492 45 1500 20 1568"],
  [W, "213 1095 225 1170 240 1238"],
  [W, "1043 245 1075 320 1130 400"],
  [W, "1440 480 1568 515"],
  [E, "0 515 70 530 145 548"],
  [W, "1043 1195 980 1270 900 1410 875 1480 870 1530 855 1568"],
  [W, "875 1042 940 1040 1000 1033"],
  [SW, "30 165 15 250 0 330"],
  [SW, "855 165 855 200 905 270 925 370 930 440 955 480 950 780 968 850 965 960 990 1080"],
  [SW, "1070 640 955 800 830 930 690 1080"],
  [SW, "1080 740 1095 850 1130 970 1130 1050 1105 1080"],
  [SW, "1197 1080 1197 1040"],
  [NE, "1280 1395 1345 1373 1480 1382"],
  [NE, "1335 1217 1375 1225 1385 1280 1465 1380 1510 1440"],
  [NE, "805 1510 785 1568"],
  [E, "803 0 780 58 735 180 700 280 650 390 632 500 620 590 585 680 520 790 485 900 488 1020 475 1120 440 1225 420 1290 418 1420 413 1568"],
  [E, "1525 1175 1490 1280 1450 1370 1420 1420 1350 1490 1240 1568"],
  [SE, "1255 165 1230 190 1190 260 1150 340 1080 400 1050 480 1030 560 1040 640 1075 775"],
  [SE, "940 330 920 420 880 510 875 590 860 655 980 725 995 770"],
  [SE, "745 835 765 765 1080 778"],
  [SE, "565 860 620 845 730 860 1085 892"],
  [SE, "1095 933 1195 942 1220 980 1230 1080"],
  [SE, "530 980 560 1000 830 1020 1060 1040"],
];

const bridleways: Feature[] = [
  [NW, "1118 470 1080 560 1050 680 1010 780 1000 880 1012 900 1013 945"],
  [NW, "245 1050 225 1090 220 1155 270 1195 350 1290 390 1380 445 1495 450 1568"],
  [NW, "445 1490 500 1485 525 1470 580 1497"],
  [NW, "510 1490 482 1560"],
  [W, "447 0 462 90 455 200 440 300 437 400 443 470 440 500 540 595 640 675"],
  [W, "455 205 475 223 540 220 620 255 690 292 760 288 840 275"],
];

const borders: Feature[] = [
  [NW, "0 995 60 1160 160 1430 215 1568"],
  [W, "190 0 240 130 330 400 430 680 500 880 575 1082 1000 1095 1568 1108"],
  [E, "0 1108 400 1120 800 1132 1568 1153"],
];

const powerLines: Feature[] = [
  [NW, "565 0 537 63 425 160 250 315 192 453 0 472"],
  [SE, "1195 1080 1215 1050 1280 1080"],
];

const route: Feature[] = [
  [NE, "552 -10 490 100 440 200 380 300 270 540 205 660 170 760 90 930 40 960"],
  [NW, "1568 1130 1578 1200 1560 1250 1530 1340 1500 1372 1460 1345 1420 1340 1380 1410 1345 1500 1336 1580"],
  [NW, "1500 1370 1500 1420 1450 1500 1405 1580"],
  [W, "1340 0 1338 100 1300 230"],
  [W, "1432 -10 1400 80 1365 130 1350 230"],
  [W, "1205 372 1140 410 1090 490 1055 570 1040 660 1030 850 1018 950 1025 1100 1040 1160 1080 1210 1125 1235 1190 1210 1225 1170 1252 1070 1282 960 1285 820 1300 720 1325 640"],
  [W, "1287 620 1272 800"],
  [W, "1280 760 1292 960 1270 1030 1240 1150"],
  [W, "1125 1235 1125 1310 1110 1355 1050 1410 1037 1460 1037 1490 1050 1568 1060 1640"],
  [W, "1165 1640 1180 1568 1210 1440 1218 1392 1235 1395 1290 1430 1345 1450 1390 1465 1450 1455 1510 1490 1575 1502"],
  [W, "1238 1190 1325 1195 1390 1230 1470 1235 1520 1265 1575 1273"],
  [E, "0 1272 30 1290 55 1330 62 1370 85 1430 90 1510 110 1568 140 1630"],
  [E, "0 1500 18 1505 30 1530 30 1640"],
  [SW, "1075 625 1085 690 1110 760 1140 820 1160 890 1190 980 1240 1045 1330 1070 1385 1010 1350 920 1280 840 1200 810 1150 750 1125 670 1120 590"],
  [SE, "225 510 260 580 265 660 250 760 220 860 195 930 195 965 70 965 10 930 -15 860 -10 780 40 700 95 620"],
];

const TILE = 338.6;
const sparseTrees =
  "72 57 334 35 409 82 585 95 147 117 320 158 515 162 87 183 219 194 403 191 713 209 291 263 481 270 49 291 136 328 403 318 575 272 662 305 725 383 329 388 75 422 243 431 575 440 160 469 303 505 518 503 35 529 427 552 110 566 223 569 610 568 347 590 697 607 527 622 55 659 441 661 176 681 700 714 354 731 515 740 38 785 127 775 234 778 418 796 590 808 320 828 676 840 498 881 82 896 423 908 633 931 737 926 167 917 5 924";

const treePoints = project([{ ...W, y: 0 }, sparseTrees]);
const wrap = [0, -TILE, TILE];

const Tree = ({ x, y, flip }: { x: number; y: number; flip: boolean }) => (
  <g transform={`translate(${x} ${y})${flip ? " scale(-1 1)" : ""}`}>
    <ellipse cx="-4" cy="-2.500" rx="2.500" ry="3.500" />
    <path d="M-4 1v5M3.500 -6l3.500 9H0zM3.500 3v3" />
  </g>
);

const Shapes = ({ items }: { items: Feature[] }) => (
  <>
    {items.map((f, i) => (
      <path key={i} d={polygon(f)} />
    ))}
  </>
);

const Lines = ({ items }: { items: Feature[] }) => (
  <>
    {items.map((f, i) => (
      <path key={i} d={curve(f)} />
    ))}
  </>
);

const MapLabel = styled.text<{ $size: number; $fill: string }>`
  font-family: "Noto Sans", sans-serif;
  font-size: ${(p) => p.$size}px;
  fill: ${(p) => p.$fill};
  stroke: rgba(255, 255, 255, 0.6);
  stroke-width: 2px;
  paint-order: stroke;
`;

const BadgeNumber = styled.text`
  font-size: 80px;
  font-weight: 300;
  fill: #fff;
  text-anchor: middle;
`;

const badgeShape = "M-45 0h90q10 0 10 10v85q0 4-4 7L0 134l-51-32q-4-3-4-7V10q0-10 10-10z";

const KmBadge = ({ x, y, label, stacked }: { x: number; y: number; label: string; stacked?: boolean }) => (
  <g transform={`translate(${x} ${y})`}>
    <g fill={color.primarySoft} stroke="#fff" strokeWidth="4" strokeLinejoin="round">
      {stacked && <path d={badgeShape} transform="translate(0 22)" />}
      <path d={badgeShape} />
    </g>
    <BadgeNumber y="88">{label}</BadgeNumber>
  </g>
);

const SWAMP =
  "100 293 123 285 145 297 175 308 85 312 112 316 160 324 195 322 75 332 128 328 180 337 213 334 107 345 150 348 65 362 93 363 135 364 170 358 213 357 73 379 115 377 148 376 190 387 215 388 72 397 103 392 138 390 165 396 120 398 155 403 100 414 138 411 183 412 130 430 162 424 82 428 108 445";

const CLIFF_TEETH = "873 1082 915 1083 960 1083 1000 1070 1045 1057 1087 1043";

const RunMap = () => (
  <MapDrawing viewBox="0 0 1440 1440" preserveAspectRatio="xMidYMid slice" role="img" aria-label="Mapa del recorrido">
    <defs>
      <pattern id="forest" width={TILE} height={TILE} y="580" patternUnits="userSpaceOnUse">
        <rect width={TILE} height={TILE} fill="#add19e" />
        <g fill="none" stroke="#8fba84" strokeWidth="1.200">
          {treePoints.flatMap(([x, y], i) =>
            wrap.flatMap((dx) =>
              wrap
                .filter((dy) => x + dx > -10 && x + dx < TILE + 10 && y + dy > -10 && y + dy < TILE + 10)
                .map((dy) => <Tree key={`${i}/${dx}/${dy}`} x={x + dx} y={y + dy} flip={i % 5 < 2} />)
            )
          )}
        </g>
      </pattern>
      <pattern id="orchard" width="8" height="8" patternUnits="userSpaceOnUse">
        <rect width="8" height="8" fill="#cfe4c7" />
        <circle cx="4" cy="4" r="1" fill="#e6f2e0" />
      </pattern>
      <path id="vavilova" d="M1350 692L1384 688Q1396 680 1436 640" />
    </defs>

    <rect width="1440" height="1440" fill="url(#forest)" />
    <g fill="#f2efe9"><Shapes items={sand} /></g>
    <g fill="#e0dfdf"><Shapes items={residential} /></g>
    <path d={polygon([NE, "1400 0 1568 0 1568 210 1340 50"])} fill="#f0d6d9" />
    <g fill="url(#forest)"><Shapes items={woods} /></g>
    <g fill="#cdebb0"><Shapes items={meadows} /></g>
    <path d={polygon(clearing)} fill="url(#forest)" />
    <g fill="#c8facc"><Shapes items={parks} /></g>
    <g fill="#ffffe5" stroke="#efe89a"><Shapes items={schools} /></g>
    <g fill="#aae0cb" stroke="#8fcfb8"><Shapes items={ponds} /></g>
    <path
      d={polygon([SE, "830 200 1183 222 1110 600 1190 800 1265 1080 555 1080 555 920 600 830 855 355"])}
      fill="url(#orchard)"
      stroke="#c2d8ba"
    />

    <g fill="none" stroke="#aad3df">
      <path d={curve([NW, "0 185 40 145 100 105 290 97 360 102 415 97 460 60 492 0"])} strokeWidth="10" />
      <path d={curve([SE, "1568 240 1490 310 1390 420 1360 540 1255 695 1235 880 1280 1080"])} strokeWidth="8" />
      <path
        d={curve([SE, "1568 240 1490 310 1390 420 1360 540 1255 695 1235 880 1280 1080"])}
        stroke="#b48fc4"
        strokeWidth="2"
        strokeDasharray="8 4 2 4"
      />
    </g>

    <g fill="#d9d0c9" stroke="#c6b5aa"><Shapes items={buildings} /></g>

    <g fill="none" strokeLinejoin="round">
      <g stroke="#c4c4c4" strokeWidth="4"><Lines items={alleys} /></g>
      <g stroke="#ededed" strokeWidth="2"><Lines items={alleys} /></g>
      <g stroke="#c9c9c9" strokeWidth="6"><Lines items={lanes} /></g>
      <g stroke="#fff" strokeWidth="4"><Lines items={lanes} /></g>
      <g stroke="#c6c6c6" strokeWidth="10"><Lines items={streets} /></g>
      <g stroke="#fff" strokeWidth="8"><Lines items={streets} /></g>
      <path d={avenue} stroke="#bdbdbd" strokeWidth="15" />
      <path d={avenue} stroke="#fff" strokeWidth="12" />
      <path d={curve([NE, "1290 -20 1440 65 1580 180"])} stroke="#c9ca8c" strokeWidth="20" />
      <path d={curve([NE, "1290 -20 1440 65 1580 180"])} stroke="#f7fabf" strokeWidth="18" />
      <g stroke="#bcd0b2" strokeWidth="10"><Lines items={forestRoad} /></g>
      <g stroke="#fff" strokeWidth="8"><Lines items={forestRoad} /></g>
      <g stroke="#bdb6c0" strokeWidth="9"><Lines items={skiTrack} /></g>
      <g stroke="#dddde8" strokeWidth="7"><Lines items={skiTrack} /></g>
    </g>

    <g fill="none">
      <g stroke="#fff" strokeOpacity="0.35" strokeWidth="5">
        <Lines items={footpaths} />
        <Lines items={tracks} />
        <Lines items={bridleways} />
      </g>
      <g stroke="#fa8072" strokeWidth="2" strokeDasharray="3 3"><Lines items={footpaths} /></g>
      <g stroke="#ac8327" strokeWidth="2" strokeDasharray="6 6"><Lines items={tracks} /></g>
      <g stroke="#2b2bf0" strokeWidth="2" strokeDasharray="2 3"><Lines items={bridleways} /></g>
      <g stroke="#ac46ac" strokeOpacity="0.5" strokeWidth="2" strokeDasharray="2 4"><Lines items={borders} /></g>
      <g stroke="#8a8a8a"><Lines items={powerLines} /></g>
      <path d="M113 401L417 705" stroke="#7d8a78" strokeWidth="2" />
      <path d="M113 401L417 705" stroke="#222" strokeWidth="4" strokeDasharray="3 38" strokeDashoffset="-40" />
      <path d={polygon([E, "855 1080 965 1082 1090 1045 1180 940 1187 885 1180 940 1090 1045 965 1082"])} stroke="#999" strokeWidth="2" />
    </g>
    <g fill="#999">
      {project([E, CLIFF_TEETH]).map(([x, y]) => (
        <path key={x} d={`M${x - 3} ${y}h7l-4 7z`} />
      ))}
      {project([E, "1122 1015 1155 978 1185 935"]).map(([x, y]) => (
        <path key={x} d={`M${x - 4} ${y}l7-5 0 9z`} />
      ))}
    </g>
    <path d="M109 397h8v8h-8zM413 701h8v8h-8z" fill="#7b7bb0" />
    <g stroke="#4a9ff0" strokeWidth="2">
      {project([E, SWAMP]).map(([x, y]) => (
        <path key={`${x}/${y}`} d={`M${x - 4} ${Math.round(y)}h9`} />
      ))}
    </g>

    {/* points of interest */}
    <circle cx="293" cy="335" r="5" fill="#fff" stroke="#7fb2e8" strokeWidth="2" />
    <circle cx="1230" cy="152" r="9" fill="#cc3333" />
    <path d="M1230 147v10M1225 152h10" stroke="#fff" strokeWidth="3" />
    <path d="M1262 221v18M1256 228h13" stroke="#000" strokeWidth="3" />
    <path d={CART} fill="#ac39ac" transform="translate(1025 179)" />
    <path d={CART} fill="#ac39ac" transform="translate(1325 171)" />
    <path d="M975 56h8v6h-8zM973 64h13v10h-13z" fill="#8a6a2c" />
    <path d="M937 99h8v14h-8z" fill="none" stroke="#8a6a2c" strokeWidth="2" />
    <path d="M1390 48l12 8m-5-7l5 7h-8" stroke="#666" strokeWidth="2" fill="none" />

    {/* place names */}
    <MapLabel $size={20} $fill="#777" x="1204" y="34">Академгородок</MapLabel>
    <g textAnchor="middle">
      <MapLabel $size={13} $fill="#5a86c8" x="293" y="354">Верхний</MapLabel>
      <MapLabel $size={13} $fill="#5a86c8" x="293" y="369">ключ</MapLabel>
      <MapLabel $size={13} $fill="#c8323c" x="1230" y="175">Поликлиника</MapLabel>
      <MapLabel $size={13} $fill="#c8323c" x="1230" y="190">ТНЦ СО</MapLabel>
      <MapLabel $size={13} $fill="#c8323c" x="1230" y="206">РАН</MapLabel>
    </g>
    <MapLabel $size={13} $fill="#666" transform="translate(1291 40) rotate(31)">Кедровая аллея</MapLabel>
    <MapLabel $size={13} $fill="#555" transform="translate(1408 68) rotate(32)">Акад</MapLabel>
    <MapLabel $size={13} $fill="#333" transform="translate(1040 353) rotate(-62)">улица 30-летия Победы</MapLabel>
    <MapLabel $size={13} $fill="#333" transform="translate(968 500) rotate(29)">улица Вавилова</MapLabel>
    <MapLabel $size={13} $fill="#333">
      <textPath href="#vavilova">улица Вавилова</textPath>
    </MapLabel>
    <MapLabel $size={13} $fill="#444" transform="translate(958 868) rotate(-60)">Дорога жизни</MapLabel>
    <MapLabel $size={13} $fill="#444" transform="translate(839 1377) rotate(84)">Дорога ж</MapLabel>
    <MapLabel $size={13} $fill="#b45ab4" transform="translate(661 967) rotate(1)">Советский район</MapLabel>
    <MapLabel $size={13} $fill="#b45ab4" transform="translate(1251 979) rotate(1)">Советский район</MapLabel>
    <MapLabel $size={13} $fill="#b45ab4" transform="translate(1119 1003) rotate(1)">Кировский район</MapLabel>
    <MapLabel $size={13} $fill="#b45ab4" transform="translate(10 384) rotate(66)">Советский район</MapLabel>
    <MapLabel $size={13} $fill="#b45ab4" transform="translate(39 512) rotate(65)">Кировский район</MapLabel>
    <MapLabel $size={13} $fill="#333" transform="translate(563 1033) rotate(-81)">Лыжероллерная трасса</MapLabel>
    <MapLabel $size={13} $fill="#6f97c8" transform="translate(1314 1308) rotate(-54)">Ушайка</MapLabel>
    <MapLabel $size={13} $fill="#6f97c8" transform="translate(12 82) rotate(-48)">йка</MapLabel>

    {/* recorded route */}
    <g fill="none" strokeLinejoin="round">
      <g stroke={color.primary} strokeWidth="14"><Lines items={route} /></g>
      <g stroke="#fff" strokeOpacity="0.2" strokeWidth="14" strokeDasharray="1 24"><Lines items={route} /></g>
    </g>
    <path
      d={PIN}
      transform="translate(648 305) scale(6)"
      fill={color.primaryDark}
    />
    <KmBadge x={845} y={80} label="5" />
    <KmBadge x={604} y={657} label="4" stacked />
    <KmBadge x={494} y={1155} label="1" />
    <KmBadge x={762} y={1155} label="2" />
  </MapDrawing>
);

/* ------------------------------------------------------------------ */
/* Screen                                                              */
/* ------------------------------------------------------------------ */

const steps = [
  { run: false, minutes: 5 },
  { run: true, minutes: 6 },
  { run: false, minutes: 2 },
  { run: true, minutes: 16 },
  { run: false, minutes: 2 },
];

export default function App() {
  return (
    <>
      <GlobalStyle />
      <Screen>
        <StatusBar>
          <Notifications>
            <Glyph d={USB} size={60} />
            <RunnerRing />
            <Droid />
          </Notifications>
          <SystemState>
            <Alarm />
            <Wifi />
            <Signal />
            <BatteryLevel>97%</BatteryLevel>
            <Battery />
            <Clock>10:57</Clock>
          </SystemState>
        </StatusBar>

        <AppBar>
          <IconButton type="button" aria-label="Atrás">
            <Glyph d={BACK} size={96} />
          </IconButton>
          <Titles>
            <Title>Estadística</Title>
            <Subtitle>01 agosto, 07:46</Subtitle>
          </Titles>
          <IconButton type="button" aria-label="Compartir">
            <Glyph d={SHARE} size={96} />
          </IconButton>
        </AppBar>

        <MapSection>
          <RunMap />
          <MapOverlay>
            <StatStrip>
              <Stat>
                <Glyph d={TIMER} size={72} />
                44 minutos
              </Stat>
              <Stat $end>
                <Glyph d={RUN} size={72} />
                30 minutos
              </Stat>
            </StatStrip>
            <OverlaySpacer />
            <StatStrip>
              <Stat>
                <Glyph d={TIMELINE} size={72} />
                5.2 km
              </Stat>
              <AppLogo />
              <Stat $end>
                <Glyph d={FLAME} size={72} />
                400 Cal
              </Stat>
            </StatStrip>
            <Attribution>© OpenStreetMap contributors</Attribution>
          </MapOverlay>
        </MapSection>

        <Details>
          <SummaryLine>
            <Glyph d={RUN} size={72} />
            <span>3.8 km</span>
            <Tinted $tint={color.primarySoft}>
              <Glyph d={WALK} size={72} />
            </Tinted>
            <span>1.5 km</span>
          </SummaryLine>
          <SummaryLine>
            <Glyph d={TIMELINE} size={72} />
            <Tinted $tint={color.primarySoft}>5760 pasos</Tinted>
          </SummaryLine>
          <RoutineTitle>Rutina de entrenamiento</RoutineTitle>
          <RoutineList>
            {steps.map((step, i) => (
              <RoutineStep key={i} $run={step.run}>
                <StepIcon>
                  <Glyph d={step.run ? RUN : WALK} size={72} />
                </StepIcon>
                {step.minutes} minutos
              </RoutineStep>
            ))}
          </RoutineList>
        </Details>

        <NavBar>
          <IconButton type="button" aria-label="Volver">
            <svg width="80" height="80" viewBox="0 0 80 80" fill="none" stroke="currentColor" strokeWidth="6" strokeLinejoin="round">
              <path d="M14 36L58 9q8-3 9 5v52q-1 8-9 5L14 44q-5-4 0-8z" />
            </svg>
          </IconButton>
          <IconButton type="button" aria-label="Inicio">
            <svg width="80" height="80" viewBox="0 0 80 80" fill="none" stroke="currentColor" strokeWidth="6">
              <circle cx="40" cy="40" r="31" />
            </svg>
          </IconButton>
          <IconButton type="button" aria-label="Recientes">
            <svg width="80" height="80" viewBox="0 0 80 80" fill="none" stroke="currentColor" strokeWidth="6">
              <rect x="10" y="9" width="62" height="63" rx="7" />
            </svg>
          </IconButton>
        </NavBar>
      </Screen>
    </>
  );
}
